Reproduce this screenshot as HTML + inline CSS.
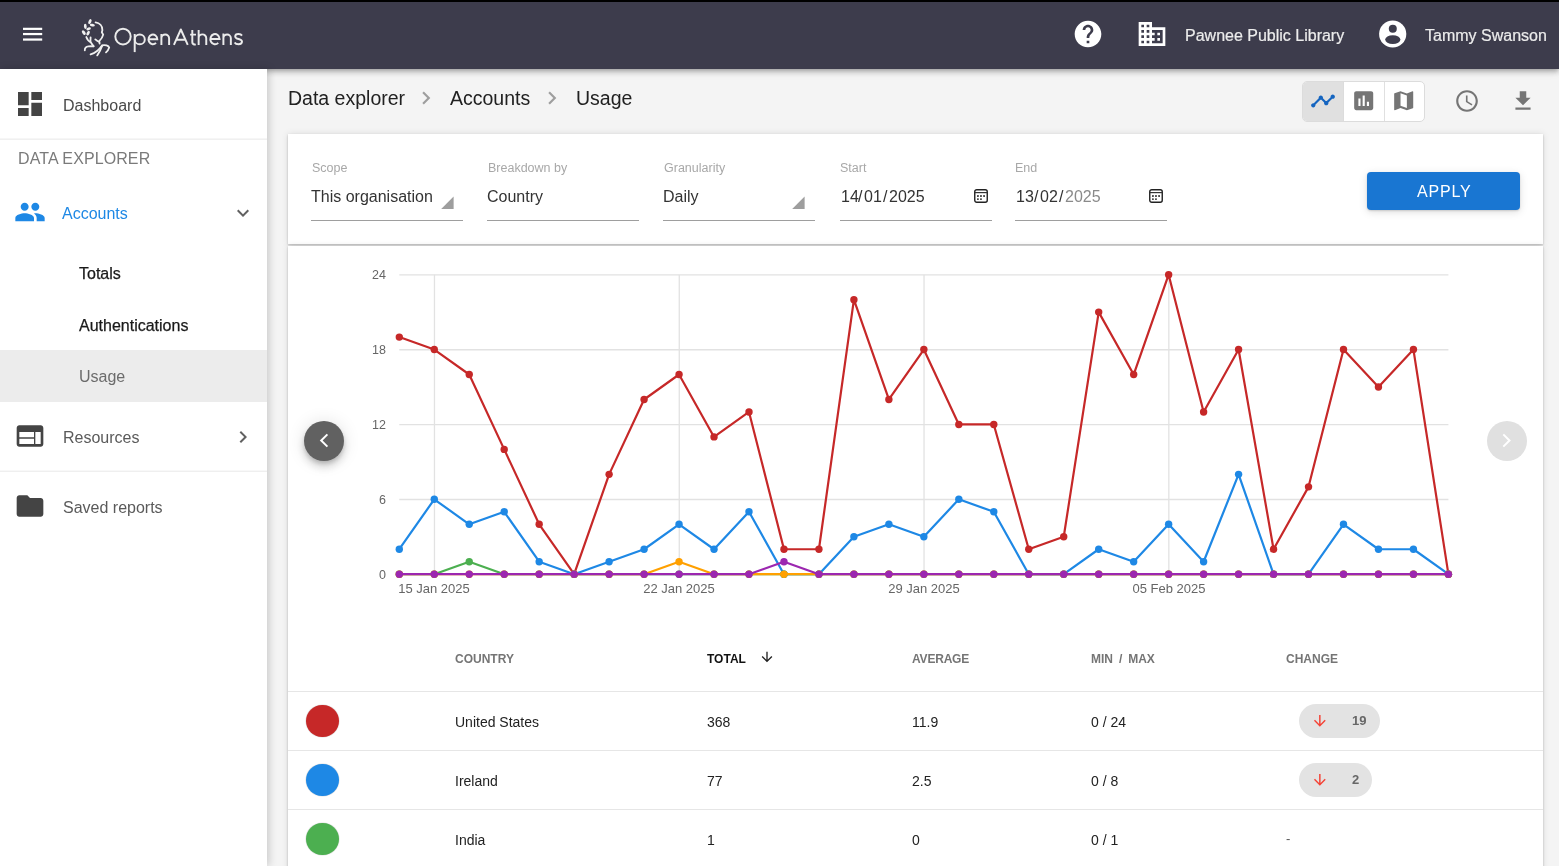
<!DOCTYPE html><html><head><meta charset="utf-8"><style>
*{box-sizing:border-box}
html,body{margin:0;padding:0}
body{width:1559px;height:866px;overflow:hidden;position:relative;background:#f4f4f4;font-family:"Liberation Sans",sans-serif}
.t{position:absolute;white-space:nowrap;line-height:1;will-change:transform}
.r{position:absolute}
</style></head><body>
<div class="r" style="left:0px;top:0px;width:1559px;height:2px;background:#000;"></div>
<div class="r" style="left:0px;top:2px;width:1559px;height:67px;background:#3d3c4c;box-shadow:0 2px 4px -1px rgba(0,0,0,.2),0 4px 5px 0 rgba(0,0,0,.14),0 1px 10px 0 rgba(0,0,0,.12);z-index:5"></div>
<svg class="r" style="left:0;top:0;z-index:6" width="60" height="68"><g fill="#fff"><rect x="23" y="27.75" width="19.2" height="2.2"/><rect x="23" y="32.95" width="19.2" height="2.2"/><rect x="23" y="38.45" width="19.2" height="2.2"/></g></svg><svg class="r" style="left:0;top:0;z-index:6" width="120" height="68" viewBox="0 0 120 68">
<g fill="#f0f0f0">
<ellipse cx="89.9" cy="21.6" rx="1.4" ry="2.6" transform="rotate(25 89.9 21.6)"/>
<ellipse cx="92.3" cy="25.1" rx="2.6" ry="1.35" transform="rotate(10 92.3 25.1)"/>
<ellipse cx="85.3" cy="26.3" rx="1.4" ry="2.6" transform="rotate(-5 85.3 26.3)"/>
<ellipse cx="88.6" cy="28.8" rx="2.4" ry="1.35" transform="rotate(-20 88.6 28.8)"/>
<ellipse cx="83.8" cy="32.6" rx="1.5" ry="2.6" transform="rotate(-35 83.8 32.6)"/>
<ellipse cx="88.1" cy="33.2" rx="1.4" ry="2.5" transform="rotate(30 88.1 33.2)"/>
</g>
<g fill="none" stroke="#f0f0f0" stroke-width="1.8" stroke-linecap="round" stroke-linejoin="round">
<path d="M95.6 22.4 C99.5 23 102.6 26 102.4 30.2 L101.8 32.2 L103.2 34.6 C102.6 37.2 101 39.4 99.2 41.2 L99.6 43.6"/>
<path d="M95.3 39.4 C96.6 40.6 98 41.6 99.4 42"/>
<path d="M86.3 37 C87.2 39.6 89 41.4 90.6 42 C91.6 43.6 92.6 45.2 93.6 46.2"/>
<path d="M90.6 37.4 L90.4 42"/>
<path d="M84.8 50.3 C84.6 48 86 46.6 88.4 46.4 C90.4 46.2 92 46.2 93.6 46.4"/>
<path d="M90.6 54.4 C95 53 99.4 49.4 102 45.4 C105 44.6 108.6 45.6 109.2 47.6 C108.6 49.6 107.4 51.2 106 52.4"/>
<path d="M97.2 55.4 C99 52.8 100.8 49.8 102.2 45.6"/>
</g></svg>
<svg class="r" style="left:0;top:0;z-index:6" width="260" height="68"><g fill="none" stroke="#ebebeb" stroke-width="1.95">
<ellipse cx="123.0" cy="36.6" rx="7.7" ry="7.9"/>
<path d="M134.7 34.0 V52.1"/><ellipse cx="139.75" cy="39.4" rx="5.05" ry="4.9"/>
<path d="M148.5 39.3 H157.3 A4.4 4.85 0 1 0 156.0 42.83"/>
<path d="M161.4 45.1 V33.9 M161.4 38.4 A3.85 3.85 0 0 1 169.1 38.4 V45.1"/>
<path stroke-linejoin="round" d="M173.9 44.9 L180.83 29.5 L187.75 44.9 M176.2 39.7 H185.4"/>
<path d="M192.3 29.95 V42.2 C192.3 44.0 193.6 44.6 195.8 44.6 M190.1 34.6 H196"/>
<path d="M198.65 29.95 V44.9 M198.65 38.2 A3.8 3.8 0 0 1 206.25 38.2 V44.9"/>
<path d="M210.35 39.0 H219.55 A4.6 5.1 0 1 0 218.2 42.8"/>
<path d="M223.4 44.9 V33.6 M223.4 38.2 A3.725 3.725 0 0 1 230.85 38.2 V44.9"/>
<path d="M242.0 35.6 C241.2 34.4 239.9 34.0 238.5 34.0 C236.4 34.0 235.2 35.0 235.2 36.4 C235.2 39.7 242.0 38.4 242.0 41.6 C242.0 43.3 240.5 44.3 238.5 44.3 C236.8 44.3 235.4 43.7 234.6 42.4"/>
</g></svg>
<svg class="r" style="left:1071.8px;top:18px;z-index:6" width="32" height="32" viewBox="0 0 24 24"><path fill="#fff" d="M12 2C6.48 2 2 6.48 2 12s4.48 10 10 10 10-4.48 10-10S17.52 2 12 2zm1 17h-2v-2h2v2zm2.07-7.75l-.9.92C13.45 12.9 13 13.5 13 15h-2v-.5c0-1.1.45-2.1 1.17-2.83l1.24-1.26c.37-.36.59-.86.59-1.41 0-1.1-.9-2-2-2s-2 .9-2 2H8c0-2.21 1.79-4 4-4s4 1.79 4 4c0 .88-.36 1.68-.93 2.25z"/></svg>
<svg class="r" style="left:1135.8px;top:17.9px;z-index:6" width="32" height="32" viewBox="0 0 24 24"><path fill="#fff" d="M12 7V3H2v18h20V7H12zM6 19H4v-2h2v2zm0-4H4v-2h2v2zm0-4H4V9h2v2zm0-4H4V5h2v2zm4 12H8v-2h2v2zm0-4H8v-2h2v2zm0-4H8V9h2v2zm0-4H8V5h2v2zm10 12h-8v-2h2v-2h-2v-2h2v-2h-2V9h8v10zm-2-8h-2v2h2v-2zm0 4h-2v2h2v-2z"/></svg>
<svg class="r" style="left:1379px;top:20px;z-index:6" width="28" height="28" viewBox="0 0 28 28"><circle cx="13.7" cy="14" r="13.6" fill="#fff"/><circle cx="13.8" cy="8.8" r="4" fill="#3d3c4c"/><ellipse cx="13.8" cy="19.6" rx="7.6" ry="4.3" fill="#3d3c4c"/></svg>
<div class="t" style="left:1184.50px;top:28.00px;font-size:16px;color:#ececec;font-weight:400;z-index:6;-webkit-text-stroke:0.2px #ececec">Pawnee Public Library</div>
<div class="t" style="left:1425.20px;top:28.00px;font-size:16px;color:#ececec;font-weight:400;z-index:6;-webkit-text-stroke:0.2px #ececec">Tammy Swanson</div>
<div class="r" style="left:0px;top:69px;width:267px;height:797px;background:#fff;box-shadow:2px 0 8px rgba(0,0,0,0.18);z-index:7"></div>
<svg class="r" style="left:14px;top:88px;z-index:8" width="32" height="32" viewBox="0 0 24 24"><path fill="#444" d="M3 13h8V3H3v10zm0 8h8v-6H3v6zm10 0h8V11h-8v10zm0-18v6h8V3h-8z"/></svg>
<div class="t" style="left:62.50px;top:98.00px;font-size:16px;color:#4a4a4a;font-weight:400;z-index:8">Dashboard</div>
<div class="r" style="left:0px;top:138px;width:267px;height:1px;background:#f6f6f6;z-index:8"></div>
<div class="r" style="left:0px;top:139px;width:267px;height:1px;background:#f0f0f0;z-index:8"></div>
<div class="t" style="left:17.50px;top:151.00px;font-size:16px;color:#7a7a7a;font-weight:400;z-index:8;letter-spacing:0.1px">DATA EXPLORER</div>
<svg class="r" style="left:14px;top:196px;z-index:8" width="32" height="32" viewBox="0 0 24 24"><path fill="#1e88e5" d="M16 11c1.66 0 2.99-1.34 2.99-3S17.66 5 16 5c-1.66 0-3 1.34-3 3s1.34 3 3 3zm-8 0c1.66 0 2.99-1.34 2.99-3S9.66 5 8 5C6.34 5 5 6.34 5 8s1.34 3 3 3zm0 2c-2.33 0-7 1.17-7 3.5V19h14v-2.5c0-2.33-4.67-3.5-7-3.5zm8 0c-.29 0-.62.02-.97.05 1.16.84 1.97 1.97 1.97 3.45V19h6v-2.5c0-2.330-4.67-3.5-7-3.5z"/></svg>
<div class="t" style="left:62.00px;top:206.00px;font-size:16px;color:#1e88e5;font-weight:400;z-index:8">Accounts</div>
<svg class="r" style="left:230.6px;top:201.2px;z-index:8" width="24" height="24" viewBox="0 0 24 24"><path fill="#616161" d="M16.59 8.59L12 13.17 7.41 8.59 6 10l6 6 6-6z"/></svg>
<div class="t" style="left:78.70px;top:266.00px;font-size:16px;color:#1a1a1a;font-weight:400;z-index:8;-webkit-text-stroke:0.25px #1a1a1a">Totals</div>
<div class="t" style="left:78.50px;top:318.00px;font-size:16px;color:#1a1a1a;font-weight:400;z-index:8;-webkit-text-stroke:0.25px #1a1a1a">Authentications</div>
<div class="r" style="left:0px;top:350px;width:267px;height:52px;background:#ececec;z-index:8"></div>
<div class="t" style="left:79.00px;top:369.00px;font-size:16px;color:#6b6b6b;font-weight:400;z-index:8">Usage</div>
<svg class="r" style="left:14px;top:420px;z-index:8" width="32" height="32" viewBox="0 0 24 24"><path fill="#444" d="M20 4H4c-1.1 0-1.99.9-1.99 2L2 18c0 1.1.9 2 2 2h16c1.1 0 2-.9 2-2V6c0-1.1-.9-2-2-2zm-5 14H4v-4h11v4zm0-5H4V9h11v4zm5 5h-4V9h4v9z"/></svg>
<div class="t" style="left:62.50px;top:430.00px;font-size:16px;color:#5a5a5a;font-weight:400;z-index:8">Resources</div>
<svg class="r" style="left:230.6px;top:425px;z-index:8" width="24" height="24" viewBox="0 0 24 24"><path fill="#616161" d="M10 6L8.59 7.41 13.17 12l-4.58 4.59L10 18l6-6z"/></svg>
<div class="r" style="left:0px;top:470px;width:267px;height:1px;background:#f8f8f8;z-index:8"></div>
<div class="r" style="left:0px;top:471px;width:267px;height:1px;background:#efefef;z-index:8"></div>
<svg class="r" style="left:14px;top:490px;z-index:8" width="32" height="32" viewBox="0 0 24 24"><path fill="#444" d="M10 4H4c-1.1 0-1.99.9-1.99 2L2 18c0 1.1.9 2 2 2h16c1.1 0 2-.9 2-2V8c0-1.1-.9-2-2-2h-8l-2-2z"/></svg>
<div class="t" style="left:62.50px;top:500.00px;font-size:16px;color:#5a5a5a;font-weight:400;z-index:8">Saved reports</div>
<div class="t" style="left:288.00px;top:89.00px;font-size:19.5px;color:#212121;font-weight:400;">Data explorer</div>
<svg class="r" style="left:413.2px;top:84.9px;" width="26" height="26" viewBox="0 0 24 24"><path fill="#9e9e9e" d="M10 6L8.59 7.41 13.17 12l-4.58 4.59L10 18l6-6z"/></svg>
<div class="t" style="left:449.50px;top:89.00px;font-size:19.5px;color:#212121;font-weight:400;">Accounts</div>
<svg class="r" style="left:538.8px;top:84.9px;" width="26" height="26" viewBox="0 0 24 24"><path fill="#9e9e9e" d="M10 6L8.59 7.41 13.17 12l-4.58 4.59L10 18l6-6z"/></svg>
<div class="t" style="left:575.50px;top:89.00px;font-size:19.5px;color:#212121;font-weight:400;">Usage</div>
<div class="r" style="left:1302px;top:80.5px;width:123px;height:41px;border:1px solid #dcdcdc;border-radius:5px;background:#fff;overflow:hidden"><div class="r" style="left:0;top:0;width:40px;height:39px;background:#e0e0e0"></div><div class="r" style="left:40px;top:0;width:1px;height:39px;background:#dcdcdc"></div><div class="r" style="left:81px;top:0;width:1px;height:39px;background:#e0e0e0"></div></div>
<svg class="r" style="left:1309.5px;top:87.8px;" width="26" height="26" viewBox="0 0 24 24"><path fill="#1565c0" d="M23 8c0 1.1-.9 2-2 2-.18 0-.35-.02-.51-.07l-3.56 3.55c.05.16.07.34.07.52 0 1.1-.9 2-2 2s-2-.9-2-2c0-.18.02-.36.07-.52l-2.55-2.55c-.16.05-.34.07-.52.07s-.36-.02-.52-.07l-4.55 4.56c.05.16.07.33.07.51 0 1.1-.9 2-2 2s-2-.9-2-2 .9-2 2-2c.18 0 .35.02.51.07l4.56-4.55C8.020 9.36 8 9.18 8 9c0-1.1.9-2 2-2s2 .9 2 2c0 .18-.02.36-.07.52l2.55 2.55c.16-.05.34-.07.52-.07s.36.02.52.07l3.55-3.56C19.02 8.35 19 8.18 19 8c0-1.1.9-2 2-2s2 .9 2 2z"/></svg>
<svg class="r" style="left:1350.6px;top:87.6px;" width="25.4" height="25.4" viewBox="0 0 24 24"><path fill="#757575" d="M19 3H5c-1.1 0-2 .9-2 2v14c0 1.1.9 2 2 2h14c1.1 0 2-.9 2-2V5c0-1.1-.9-2-2-2zM9 17H7v-7h2v7zm4 0h-2V7h2v10zm4 0h-2v-4h2v4z"/></svg>
<svg class="r" style="left:1391.4px;top:87.6px;" width="25.4" height="25.4" viewBox="0 0 24 24"><path fill="#757575" d="M20.5 3l-.16.03L15 5.1 9 3 3.36 4.9c-.21.07-.36.25-.36.48V20.5c0 .28.22.5.5.5l.16-.03L9 18.9l6 2.1 5.640-1.9c.21-.07.36-.25.36-.48V3.5c0-.28-.22-.5-.5-.5zM15 19l-6-2.11V5l6 2.11V19z"/></svg>
<svg class="r" style="left:1453.7px;top:87.8px;" width="26" height="26" viewBox="0 0 24 24"><path fill="#757575" d="M11.99 2C6.47 2 2 6.48 2 12s4.47 10 9.99 10C17.52 22 22 17.52 22 12S17.52 2 11.99 2zM12 20c-4.42 0-8-3.58-8-8s3.58-8 8-8 8 3.58 8 8-3.58 8-8 8zm.5-13H11v6l5.25 3.15.75-1.23-4.5-2.67z"/></svg>
<svg class="r" style="left:1509.8px;top:87.6px;" width="26" height="26" viewBox="0 0 24 24"><path fill="#757575" d="M19 9h-4V3H9v6H5l7 7 7-7zM5 18v2h14v-2H5z"/></svg>
<div class="r" style="left:288px;top:134px;width:1255px;height:110px;background:#fff;box-shadow:0 1px 2px rgba(0,0,0,0.22),0 0 7px rgba(0,0,0,0.1)"></div>
<div class="t" style="left:311.50px;top:162.00px;font-size:12.5px;color:#a8a8a8;font-weight:400;">Scope</div>
<div class="t" style="left:311.00px;top:189.00px;font-size:16px;color:#333;font-weight:400;">This organisation</div>
<div class="r" style="left:311px;top:220px;width:152px;height:1px;background:#9e9e9e;"></div>
<svg class="r" style="left:441.3px;top:196px" width="14" height="14" viewBox="0 0 14 14"><path d="M12.6 0.4V12.9H0.2Z" fill="#9e9e9e"/></svg>
<div class="t" style="left:487.50px;top:162.00px;font-size:12.5px;color:#a8a8a8;font-weight:400;">Breakdown by</div>
<div class="t" style="left:487.00px;top:189.00px;font-size:16px;color:#333;font-weight:400;">Country</div>
<div class="r" style="left:487px;top:220px;width:152px;height:1px;background:#9e9e9e;"></div>
<div class="t" style="left:663.50px;top:162.00px;font-size:12.5px;color:#a8a8a8;font-weight:400;">Granularity</div>
<div class="t" style="left:663.00px;top:189.00px;font-size:16px;color:#333;font-weight:400;">Daily</div>
<div class="r" style="left:663px;top:220px;width:152px;height:1px;background:#9e9e9e;"></div>
<svg class="r" style="left:792.4px;top:196px" width="14" height="14" viewBox="0 0 14 14"><path d="M12.6 0.4V12.9H0.2Z" fill="#9e9e9e"/></svg>
<div class="t" style="left:839.50px;top:162.00px;font-size:12.5px;color:#a8a8a8;font-weight:400;">Start</div>
<div class="t" style="left:840.50px;top:189.00px;font-size:16px;color:#333;font-weight:400;">14</div>
<div class="t" style="left:858.00px;top:189.00px;font-size:16px;color:#333;font-weight:400;">/</div>
<div class="t" style="left:864.00px;top:189.00px;font-size:16px;color:#333;font-weight:400;">01</div>
<div class="t" style="left:882.80px;top:189.00px;font-size:16px;color:#333;font-weight:400;">/</div>
<div class="t" style="left:888.80px;top:189.00px;font-size:16px;color:#333;font-weight:400;">2025</div>
<div class="r" style="left:840px;top:220px;width:152px;height:1px;background:#9e9e9e;"></div>
<svg class="r" style="left:974px;top:189px" width="14" height="14" viewBox="0 0 14 14"><rect x="0.75" y="0.75" width="12.5" height="12.5" rx="2" fill="none" stroke="#222" stroke-width="1.4"/><rect x="1" y="3" width="12" height="1.2" fill="#333"/><g fill="#444"><rect x="3" y="6.1" width="1.8" height="1.8" rx="0.5"/><rect x="6.05" y="6.1" width="1.8" height="1.8" rx="0.5"/><rect x="9.2" y="6.1" width="1.8" height="1.8" rx="0.5"/><rect x="3" y="9.2" width="1.8" height="1.8" rx="0.5"/><rect x="6.05" y="9.2" width="1.8" height="1.8" rx="0.5"/></g></svg>
<div class="t" style="left:1014.50px;top:162.00px;font-size:12.5px;color:#a8a8a8;font-weight:400;">End</div>
<div class="t" style="left:1016.40px;top:189.00px;font-size:16px;color:#333;font-weight:400;">13</div>
<div class="t" style="left:1033.90px;top:189.00px;font-size:16px;color:#333;font-weight:400;">/</div>
<div class="t" style="left:1039.90px;top:189.00px;font-size:16px;color:#333;font-weight:400;">02</div>
<div class="t" style="left:1058.70px;top:189.00px;font-size:16px;color:#333;font-weight:400;">/</div>
<div class="t" style="left:1064.70px;top:189.00px;font-size:16px;color:#8a8a8a;font-weight:400;">2025</div>
<div class="r" style="left:1015px;top:220px;width:152px;height:1px;background:#9e9e9e;"></div>
<svg class="r" style="left:1149px;top:189px" width="14" height="14" viewBox="0 0 14 14"><rect x="0.75" y="0.75" width="12.5" height="12.5" rx="2" fill="none" stroke="#222" stroke-width="1.4"/><rect x="1" y="3" width="12" height="1.2" fill="#333"/><g fill="#444"><rect x="3" y="6.1" width="1.8" height="1.8" rx="0.5"/><rect x="6.05" y="6.1" width="1.8" height="1.8" rx="0.5"/><rect x="9.2" y="6.1" width="1.8" height="1.8" rx="0.5"/><rect x="3" y="9.2" width="1.8" height="1.8" rx="0.5"/><rect x="6.05" y="9.2" width="1.8" height="1.8" rx="0.5"/></g></svg>
<div class="r" style="left:1367px;top:172px;width:153px;height:38px;background:#1976d2;border-radius:4px;box-shadow:0 1px 2px rgba(0,0,0,.14),0 2px 9px rgba(0,0,0,.13)"></div>
<div class="t" style="left:1416.80px;top:184.00px;font-size:16px;color:#fff;font-weight:400;letter-spacing:0.8px">APPLY</div>
<div class="r" style="left:288px;top:246px;width:1255px;height:640px;background:#fff;box-shadow:0 1px 2px rgba(0,0,0,0.22),0 0 7px rgba(0,0,0,0.1)"></div>
<svg class="r" style="left:0;top:0" width="1559" height="866"><line x1="399.3" y1="574.40" x2="1448.3999999999999" y2="574.40" stroke="#e2e2e2" stroke-width="1.3"/><line x1="399.3" y1="499.52" x2="1448.3999999999999" y2="499.52" stroke="#e2e2e2" stroke-width="1.3"/><line x1="399.3" y1="424.64" x2="1448.3999999999999" y2="424.64" stroke="#e2e2e2" stroke-width="1.3"/><line x1="399.3" y1="349.76" x2="1448.3999999999999" y2="349.76" stroke="#e2e2e2" stroke-width="1.3"/><line x1="399.3" y1="274.88" x2="1448.3999999999999" y2="274.88" stroke="#e2e2e2" stroke-width="1.3"/><line x1="434.47" y1="274.68000000000006" x2="434.47" y2="574.2" stroke="#e2e2e2" stroke-width="1.3"/><line x1="679.26" y1="274.68000000000006" x2="679.26" y2="574.2" stroke="#e2e2e2" stroke-width="1.3"/><line x1="924.05" y1="274.68000000000006" x2="924.05" y2="574.2" stroke="#e2e2e2" stroke-width="1.3"/><line x1="1168.84" y1="274.68000000000006" x2="1168.84" y2="574.2" stroke="#e2e2e2" stroke-width="1.3"/><polyline points="399.3,337.08000000000004 434.27,349.56000000000006 469.24,374.52000000000004 504.21000000000004,449.40000000000003 539.1800000000001,524.2800000000001 574.15,574.2 609.12,474.36 644.09,399.48 679.06,374.52000000000004 714.03,436.9200000000001 749.0,411.96000000000004 783.97,549.24 818.94,549.24 853.9100000000001,299.64000000000004 888.88,399.48 923.8499999999999,349.56000000000006 958.8199999999999,424.44000000000005 993.79,424.44000000000005 1028.76,549.24 1063.73,536.76 1098.7,312.12000000000006 1133.67,374.52000000000004 1168.6399999999999,274.68000000000006 1203.61,411.96000000000004 1238.58,349.56000000000006 1273.55,549.24 1308.52,486.84000000000003 1343.49,349.56000000000006 1378.46,387.0 1413.43,349.56000000000006 1448.3999999999999,574.2" fill="none" stroke="#c62828" stroke-width="2.2" stroke-linejoin="round"/><circle cx="399.3" cy="337.08000000000004" r="3.7" fill="#c62828"/><circle cx="434.27" cy="349.56000000000006" r="3.7" fill="#c62828"/><circle cx="469.24" cy="374.52000000000004" r="3.7" fill="#c62828"/><circle cx="504.21000000000004" cy="449.40000000000003" r="3.7" fill="#c62828"/><circle cx="539.1800000000001" cy="524.2800000000001" r="3.7" fill="#c62828"/><circle cx="574.15" cy="574.2" r="3.7" fill="#c62828"/><circle cx="609.12" cy="474.36" r="3.7" fill="#c62828"/><circle cx="644.09" cy="399.48" r="3.7" fill="#c62828"/><circle cx="679.06" cy="374.52000000000004" r="3.7" fill="#c62828"/><circle cx="714.03" cy="436.9200000000001" r="3.7" fill="#c62828"/><circle cx="749.0" cy="411.96000000000004" r="3.7" fill="#c62828"/><circle cx="783.97" cy="549.24" r="3.7" fill="#c62828"/><circle cx="818.94" cy="549.24" r="3.7" fill="#c62828"/><circle cx="853.9100000000001" cy="299.64000000000004" r="3.7" fill="#c62828"/><circle cx="888.88" cy="399.48" r="3.7" fill="#c62828"/><circle cx="923.8499999999999" cy="349.56000000000006" r="3.7" fill="#c62828"/><circle cx="958.8199999999999" cy="424.44000000000005" r="3.7" fill="#c62828"/><circle cx="993.79" cy="424.44000000000005" r="3.7" fill="#c62828"/><circle cx="1028.76" cy="549.24" r="3.7" fill="#c62828"/><circle cx="1063.73" cy="536.76" r="3.7" fill="#c62828"/><circle cx="1098.7" cy="312.12000000000006" r="3.7" fill="#c62828"/><circle cx="1133.67" cy="374.52000000000004" r="3.7" fill="#c62828"/><circle cx="1168.6399999999999" cy="274.68000000000006" r="3.7" fill="#c62828"/><circle cx="1203.61" cy="411.96000000000004" r="3.7" fill="#c62828"/><circle cx="1238.58" cy="349.56000000000006" r="3.7" fill="#c62828"/><circle cx="1273.55" cy="549.24" r="3.7" fill="#c62828"/><circle cx="1308.52" cy="486.84000000000003" r="3.7" fill="#c62828"/><circle cx="1343.49" cy="349.56000000000006" r="3.7" fill="#c62828"/><circle cx="1378.46" cy="387.0" r="3.7" fill="#c62828"/><circle cx="1413.43" cy="349.56000000000006" r="3.7" fill="#c62828"/><circle cx="1448.3999999999999" cy="574.2" r="3.7" fill="#c62828"/><polyline points="399.3,549.24 434.27,499.32000000000005 469.24,524.2800000000001 504.21000000000004,511.80000000000007 539.1800000000001,561.72 574.15,574.2 609.12,561.72 644.09,549.24 679.06,524.2800000000001 714.03,549.24 749.0,511.80000000000007 783.97,574.2 818.94,574.2 853.9100000000001,536.76 888.88,524.2800000000001 923.8499999999999,536.76 958.8199999999999,499.32000000000005 993.79,511.80000000000007 1028.76,574.2 1063.73,574.2 1098.7,549.24 1133.67,561.72 1168.6399999999999,524.2800000000001 1203.61,561.72 1238.58,474.36 1273.55,574.2 1308.52,574.2 1343.49,524.2800000000001 1378.46,549.24 1413.43,549.24 1448.3999999999999,574.2" fill="none" stroke="#1e88e5" stroke-width="2.2" stroke-linejoin="round"/><circle cx="399.3" cy="549.24" r="3.7" fill="#1e88e5"/><circle cx="434.27" cy="499.32000000000005" r="3.7" fill="#1e88e5"/><circle cx="469.24" cy="524.2800000000001" r="3.7" fill="#1e88e5"/><circle cx="504.21000000000004" cy="511.80000000000007" r="3.7" fill="#1e88e5"/><circle cx="539.1800000000001" cy="561.72" r="3.7" fill="#1e88e5"/><circle cx="574.15" cy="574.2" r="3.7" fill="#1e88e5"/><circle cx="609.12" cy="561.72" r="3.7" fill="#1e88e5"/><circle cx="644.09" cy="549.24" r="3.7" fill="#1e88e5"/><circle cx="679.06" cy="524.2800000000001" r="3.7" fill="#1e88e5"/><circle cx="714.03" cy="549.24" r="3.7" fill="#1e88e5"/><circle cx="749.0" cy="511.80000000000007" r="3.7" fill="#1e88e5"/><circle cx="783.97" cy="574.2" r="3.7" fill="#1e88e5"/><circle cx="818.94" cy="574.2" r="3.7" fill="#1e88e5"/><circle cx="853.9100000000001" cy="536.76" r="3.7" fill="#1e88e5"/><circle cx="888.88" cy="524.2800000000001" r="3.7" fill="#1e88e5"/><circle cx="923.8499999999999" cy="536.76" r="3.7" fill="#1e88e5"/><circle cx="958.8199999999999" cy="499.32000000000005" r="3.7" fill="#1e88e5"/><circle cx="993.79" cy="511.80000000000007" r="3.7" fill="#1e88e5"/><circle cx="1028.76" cy="574.2" r="3.7" fill="#1e88e5"/><circle cx="1063.73" cy="574.2" r="3.7" fill="#1e88e5"/><circle cx="1098.7" cy="549.24" r="3.7" fill="#1e88e5"/><circle cx="1133.67" cy="561.72" r="3.7" fill="#1e88e5"/><circle cx="1168.6399999999999" cy="524.2800000000001" r="3.7" fill="#1e88e5"/><circle cx="1203.61" cy="561.72" r="3.7" fill="#1e88e5"/><circle cx="1238.58" cy="474.36" r="3.7" fill="#1e88e5"/><circle cx="1273.55" cy="574.2" r="3.7" fill="#1e88e5"/><circle cx="1308.52" cy="574.2" r="3.7" fill="#1e88e5"/><circle cx="1343.49" cy="524.2800000000001" r="3.7" fill="#1e88e5"/><circle cx="1378.46" cy="549.24" r="3.7" fill="#1e88e5"/><circle cx="1413.43" cy="549.24" r="3.7" fill="#1e88e5"/><circle cx="1448.3999999999999" cy="574.2" r="3.7" fill="#1e88e5"/><polyline points="399.3,574.2 434.27,574.2 469.24,561.72 504.21000000000004,574.2 539.1800000000001,574.2 574.15,574.2 609.12,574.2 644.09,574.2 679.06,574.2 714.03,574.2 749.0,574.2 783.97,574.2 818.94,574.2 853.9100000000001,574.2 888.88,574.2 923.8499999999999,574.2 958.8199999999999,574.2 993.79,574.2 1028.76,574.2 1063.73,574.2 1098.7,574.2 1133.67,574.2 1168.6399999999999,574.2 1203.61,574.2 1238.58,574.2 1273.55,574.2 1308.52,574.2 1343.49,574.2 1378.46,574.2 1413.43,574.2 1448.3999999999999,574.2" fill="none" stroke="#4caf50" stroke-width="2.2" stroke-linejoin="round"/><circle cx="399.3" cy="574.2" r="3.7" fill="#4caf50"/><circle cx="434.27" cy="574.2" r="3.7" fill="#4caf50"/><circle cx="469.24" cy="561.72" r="3.7" fill="#4caf50"/><circle cx="504.21000000000004" cy="574.2" r="3.7" fill="#4caf50"/><circle cx="539.1800000000001" cy="574.2" r="3.7" fill="#4caf50"/><circle cx="574.15" cy="574.2" r="3.7" fill="#4caf50"/><circle cx="609.12" cy="574.2" r="3.7" fill="#4caf50"/><circle cx="644.09" cy="574.2" r="3.7" fill="#4caf50"/><circle cx="679.06" cy="574.2" r="3.7" fill="#4caf50"/><circle cx="714.03" cy="574.2" r="3.7" fill="#4caf50"/><circle cx="749.0" cy="574.2" r="3.7" fill="#4caf50"/><circle cx="783.97" cy="574.2" r="3.7" fill="#4caf50"/><circle cx="818.94" cy="574.2" r="3.7" fill="#4caf50"/><circle cx="853.9100000000001" cy="574.2" r="3.7" fill="#4caf50"/><circle cx="888.88" cy="574.2" r="3.7" fill="#4caf50"/><circle cx="923.8499999999999" cy="574.2" r="3.7" fill="#4caf50"/><circle cx="958.8199999999999" cy="574.2" r="3.7" fill="#4caf50"/><circle cx="993.79" cy="574.2" r="3.7" fill="#4caf50"/><circle cx="1028.76" cy="574.2" r="3.7" fill="#4caf50"/><circle cx="1063.73" cy="574.2" r="3.7" fill="#4caf50"/><circle cx="1098.7" cy="574.2" r="3.7" fill="#4caf50"/><circle cx="1133.67" cy="574.2" r="3.7" fill="#4caf50"/><circle cx="1168.6399999999999" cy="574.2" r="3.7" fill="#4caf50"/><circle cx="1203.61" cy="574.2" r="3.7" fill="#4caf50"/><circle cx="1238.58" cy="574.2" r="3.7" fill="#4caf50"/><circle cx="1273.55" cy="574.2" r="3.7" fill="#4caf50"/><circle cx="1308.52" cy="574.2" r="3.7" fill="#4caf50"/><circle cx="1343.49" cy="574.2" r="3.7" fill="#4caf50"/><circle cx="1378.46" cy="574.2" r="3.7" fill="#4caf50"/><circle cx="1413.43" cy="574.2" r="3.7" fill="#4caf50"/><circle cx="1448.3999999999999" cy="574.2" r="3.7" fill="#4caf50"/><polyline points="399.3,574.2 434.27,574.2 469.24,574.2 504.21000000000004,574.2 539.1800000000001,574.2 574.15,574.2 609.12,574.2 644.09,574.2 679.06,561.72 714.03,574.2 749.0,574.2 783.97,574.2 818.94,574.2 853.9100000000001,574.2 888.88,574.2 923.8499999999999,574.2 958.8199999999999,574.2 993.79,574.2 1028.76,574.2 1063.73,574.2 1098.7,574.2 1133.67,574.2 1168.6399999999999,574.2 1203.61,574.2 1238.58,574.2 1273.55,574.2 1308.52,574.2 1343.49,574.2 1378.46,574.2 1413.43,574.2 1448.3999999999999,574.2" fill="none" stroke="#ffa000" stroke-width="2.2" stroke-linejoin="round"/><circle cx="399.3" cy="574.2" r="3.7" fill="#ffa000"/><circle cx="434.27" cy="574.2" r="3.7" fill="#ffa000"/><circle cx="469.24" cy="574.2" r="3.7" fill="#ffa000"/><circle cx="504.21000000000004" cy="574.2" r="3.7" fill="#ffa000"/><circle cx="539.1800000000001" cy="574.2" r="3.7" fill="#ffa000"/><circle cx="574.15" cy="574.2" r="3.7" fill="#ffa000"/><circle cx="609.12" cy="574.2" r="3.7" fill="#ffa000"/><circle cx="644.09" cy="574.2" r="3.7" fill="#ffa000"/><circle cx="679.06" cy="561.72" r="3.7" fill="#ffa000"/><circle cx="714.03" cy="574.2" r="3.7" fill="#ffa000"/><circle cx="749.0" cy="574.2" r="3.7" fill="#ffa000"/><circle cx="783.97" cy="574.2" r="3.7" fill="#ffa000"/><circle cx="818.94" cy="574.2" r="3.7" fill="#ffa000"/><circle cx="853.9100000000001" cy="574.2" r="3.7" fill="#ffa000"/><circle cx="888.88" cy="574.2" r="3.7" fill="#ffa000"/><circle cx="923.8499999999999" cy="574.2" r="3.7" fill="#ffa000"/><circle cx="958.8199999999999" cy="574.2" r="3.7" fill="#ffa000"/><circle cx="993.79" cy="574.2" r="3.7" fill="#ffa000"/><circle cx="1028.76" cy="574.2" r="3.7" fill="#ffa000"/><circle cx="1063.73" cy="574.2" r="3.7" fill="#ffa000"/><circle cx="1098.7" cy="574.2" r="3.7" fill="#ffa000"/><circle cx="1133.67" cy="574.2" r="3.7" fill="#ffa000"/><circle cx="1168.6399999999999" cy="574.2" r="3.7" fill="#ffa000"/><circle cx="1203.61" cy="574.2" r="3.7" fill="#ffa000"/><circle cx="1238.58" cy="574.2" r="3.7" fill="#ffa000"/><circle cx="1273.55" cy="574.2" r="3.7" fill="#ffa000"/><circle cx="1308.52" cy="574.2" r="3.7" fill="#ffa000"/><circle cx="1343.49" cy="574.2" r="3.7" fill="#ffa000"/><circle cx="1378.46" cy="574.2" r="3.7" fill="#ffa000"/><circle cx="1413.43" cy="574.2" r="3.7" fill="#ffa000"/><circle cx="1448.3999999999999" cy="574.2" r="3.7" fill="#ffa000"/><polyline points="399.3,574.2 434.27,574.2 469.24,574.2 504.21000000000004,574.2 539.1800000000001,574.2 574.15,574.2 609.12,574.2 644.09,574.2 679.06,574.2 714.03,574.2 749.0,574.2 783.97,561.72 818.94,574.2 853.9100000000001,574.2 888.88,574.2 923.8499999999999,574.2 958.8199999999999,574.2 993.79,574.2 1028.76,574.2 1063.73,574.2 1098.7,574.2 1133.67,574.2 1168.6399999999999,574.2 1203.61,574.2 1238.58,574.2 1273.55,574.2 1308.52,574.2 1343.49,574.2 1378.46,574.2 1413.43,574.2 1448.3999999999999,574.2" fill="none" stroke="#9c27b0" stroke-width="2.2" stroke-linejoin="round"/><circle cx="399.3" cy="574.2" r="3.7" fill="#9c27b0"/><circle cx="434.27" cy="574.2" r="3.7" fill="#9c27b0"/><circle cx="469.24" cy="574.2" r="3.7" fill="#9c27b0"/><circle cx="504.21000000000004" cy="574.2" r="3.7" fill="#9c27b0"/><circle cx="539.1800000000001" cy="574.2" r="3.7" fill="#9c27b0"/><circle cx="574.15" cy="574.2" r="3.7" fill="#9c27b0"/><circle cx="609.12" cy="574.2" r="3.7" fill="#9c27b0"/><circle cx="644.09" cy="574.2" r="3.7" fill="#9c27b0"/><circle cx="679.06" cy="574.2" r="3.7" fill="#9c27b0"/><circle cx="714.03" cy="574.2" r="3.7" fill="#9c27b0"/><circle cx="749.0" cy="574.2" r="3.7" fill="#9c27b0"/><circle cx="783.97" cy="561.72" r="3.7" fill="#9c27b0"/><circle cx="818.94" cy="574.2" r="3.7" fill="#9c27b0"/><circle cx="853.9100000000001" cy="574.2" r="3.7" fill="#9c27b0"/><circle cx="888.88" cy="574.2" r="3.7" fill="#9c27b0"/><circle cx="923.8499999999999" cy="574.2" r="3.7" fill="#9c27b0"/><circle cx="958.8199999999999" cy="574.2" r="3.7" fill="#9c27b0"/><circle cx="993.79" cy="574.2" r="3.7" fill="#9c27b0"/><circle cx="1028.76" cy="574.2" r="3.7" fill="#9c27b0"/><circle cx="1063.73" cy="574.2" r="3.7" fill="#9c27b0"/><circle cx="1098.7" cy="574.2" r="3.7" fill="#9c27b0"/><circle cx="1133.67" cy="574.2" r="3.7" fill="#9c27b0"/><circle cx="1168.6399999999999" cy="574.2" r="3.7" fill="#9c27b0"/><circle cx="1203.61" cy="574.2" r="3.7" fill="#9c27b0"/><circle cx="1238.58" cy="574.2" r="3.7" fill="#9c27b0"/><circle cx="1273.55" cy="574.2" r="3.7" fill="#9c27b0"/><circle cx="1308.52" cy="574.2" r="3.7" fill="#9c27b0"/><circle cx="1343.49" cy="574.2" r="3.7" fill="#9c27b0"/><circle cx="1378.46" cy="574.2" r="3.7" fill="#9c27b0"/><circle cx="1413.43" cy="574.2" r="3.7" fill="#9c27b0"/><circle cx="1448.3999999999999" cy="574.2" r="3.7" fill="#9c27b0"/></svg>
<div class="t" style="left:340px;width:46px;text-align:right;top:569px;font-size:12.5px;color:#666">0</div>
<div class="t" style="left:340px;width:46px;text-align:right;top:494px;font-size:12.5px;color:#666">6</div>
<div class="t" style="left:340px;width:46px;text-align:right;top:419px;font-size:12.5px;color:#666">12</div>
<div class="t" style="left:340px;width:46px;text-align:right;top:344px;font-size:12.5px;color:#666">18</div>
<div class="t" style="left:340px;width:46px;text-align:right;top:269px;font-size:12.5px;color:#666">24</div>
<div class="t" style="left:374.27px;width:120px;text-align:center;top:582px;font-size:13px;color:#666">15 Jan 2025</div>
<div class="t" style="left:619.06px;width:120px;text-align:center;top:582px;font-size:13px;color:#666">22 Jan 2025</div>
<div class="t" style="left:863.8499999999999px;width:120px;text-align:center;top:582px;font-size:13px;color:#666">29 Jan 2025</div>
<div class="t" style="left:1108.6399999999999px;width:120px;text-align:center;top:582px;font-size:13px;color:#666">05 Feb 2025</div>
<div class="r" style="left:304.2px;top:420.5px;width:40px;height:40px;border-radius:50%;background:#616161;box-shadow:0 3px 5px -1px rgba(0,0,0,0.2),0 6px 10px 0 rgba(0,0,0,0.14),0 1px 18px 0 rgba(0,0,0,0.12)"></div>
<div class="r" style="left:1486.5px;top:420.5px;width:40px;height:40px;border-radius:50%;background:#e0e0e0"></div>
<svg class="r" style="left:0;top:0" width="1559" height="866"><path d="M327.4 434.4 L321.2 440.5 L327.4 446.6" fill="none" stroke="#fff" stroke-width="2"/><path d="M1503.3 434.4 L1509.5 440.5 L1503.3 446.6" fill="none" stroke="#fff" stroke-width="2"/></svg>
<div class="t" style="left:455.00px;top:653.00px;font-size:12px;color:#757575;font-weight:700;">COUNTRY</div>
<div class="t" style="left:706.50px;top:653.00px;font-size:12px;color:#111;font-weight:700;">TOTAL</div>
<svg class="r" style="left:758.7px;top:649.3px;" width="16" height="16" viewBox="0 0 24 24"><path fill="#212121" d="M20 12l-1.41-1.41L13 16.17V4h-2v12.17l-5.58-5.59L4 12l8 8 8-8z"/></svg>
<div class="t" style="left:912.00px;top:653.00px;font-size:12px;color:#757575;font-weight:700;letter-spacing:-0.2px">AVERAGE</div>
<div class="t" style="left:1090.50px;top:653.00px;font-size:12px;color:#757575;font-weight:700;word-spacing:2.6px">MIN / MAX</div>
<div class="t" style="left:1285.50px;top:653.00px;font-size:12px;color:#757575;font-weight:700;">CHANGE</div>
<div class="r" style="left:288px;top:691px;width:1255px;height:1px;background:#e6e6e6;"></div>
<div class="r" style="left:288px;top:750px;width:1255px;height:1px;background:#e6e6e6;"></div>
<div class="r" style="left:288px;top:809px;width:1255px;height:1px;background:#e6e6e6;"></div>
<div class="r" style="left:306px;top:704.5px;width:32.6px;height:32.6px;border-radius:50%;background:#c62828;box-shadow:0 0 0 0.6px rgba(0,0,0,0.12)"></div>
<div class="t" style="left:455.00px;top:715.00px;font-size:14px;color:#222;font-weight:400;">United States</div>
<div class="t" style="left:706.50px;top:715.00px;font-size:14px;color:#222;font-weight:400;">368</div>
<div class="t" style="left:911.50px;top:715.00px;font-size:14px;color:#222;font-weight:400;">11.9</div>
<div class="t" style="left:1090.50px;top:715.00px;font-size:14px;color:#222;font-weight:400;">0 / 24</div>
<div class="r" style="left:1298.5px;top:703.8px;width:81.5px;height:34px;border-radius:17px;background:#e3e3e3"></div>
<svg class="r" style="left:1311.25px;top:712.05px;" width="17.7" height="17.7" viewBox="0 0 24 24"><path fill="#f44336" d="M20 12l-1.41-1.41L13 16.17V4h-2v12.17l-5.58-5.59L4 12l8 8 8-8z"/></svg>
<div class="t" style="left:1351.50px;top:714.00px;font-size:13px;color:#676767;font-weight:700;">19</div>
<div class="r" style="left:306px;top:763.5px;width:32.6px;height:32.6px;border-radius:50%;background:#1e88e5;box-shadow:0 0 0 0.6px rgba(0,0,0,0.12)"></div>
<div class="t" style="left:455.00px;top:774.00px;font-size:14px;color:#222;font-weight:400;">Ireland</div>
<div class="t" style="left:706.50px;top:774.00px;font-size:14px;color:#222;font-weight:400;">77</div>
<div class="t" style="left:911.50px;top:774.00px;font-size:14px;color:#222;font-weight:400;">2.5</div>
<div class="t" style="left:1090.50px;top:774.00px;font-size:14px;color:#222;font-weight:400;">0 / 8</div>
<div class="r" style="left:1298.5px;top:762.8px;width:73px;height:34px;border-radius:17px;background:#e3e3e3"></div>
<svg class="r" style="left:1311.25px;top:771.05px;" width="17.7" height="17.7" viewBox="0 0 24 24"><path fill="#f44336" d="M20 12l-1.41-1.41L13 16.17V4h-2v12.17l-5.58-5.59L4 12l8 8 8-8z"/></svg>
<div class="t" style="left:1351.50px;top:773.00px;font-size:13px;color:#676767;font-weight:700;">2</div>
<div class="r" style="left:306px;top:822.5px;width:32.6px;height:32.6px;border-radius:50%;background:#4caf50;box-shadow:0 0 0 0.6px rgba(0,0,0,0.12)"></div>
<div class="t" style="left:455.00px;top:833.00px;font-size:14px;color:#222;font-weight:400;">India</div>
<div class="t" style="left:706.50px;top:833.00px;font-size:14px;color:#222;font-weight:400;">1</div>
<div class="t" style="left:911.50px;top:833.00px;font-size:14px;color:#222;font-weight:400;">0</div>
<div class="t" style="left:1090.50px;top:833.00px;font-size:14px;color:#222;font-weight:400;">0 / 1</div>
<div class="t" style="left:1286.00px;top:832.00px;font-size:13px;color:#555;font-weight:400;">-</div>
</body></html>
